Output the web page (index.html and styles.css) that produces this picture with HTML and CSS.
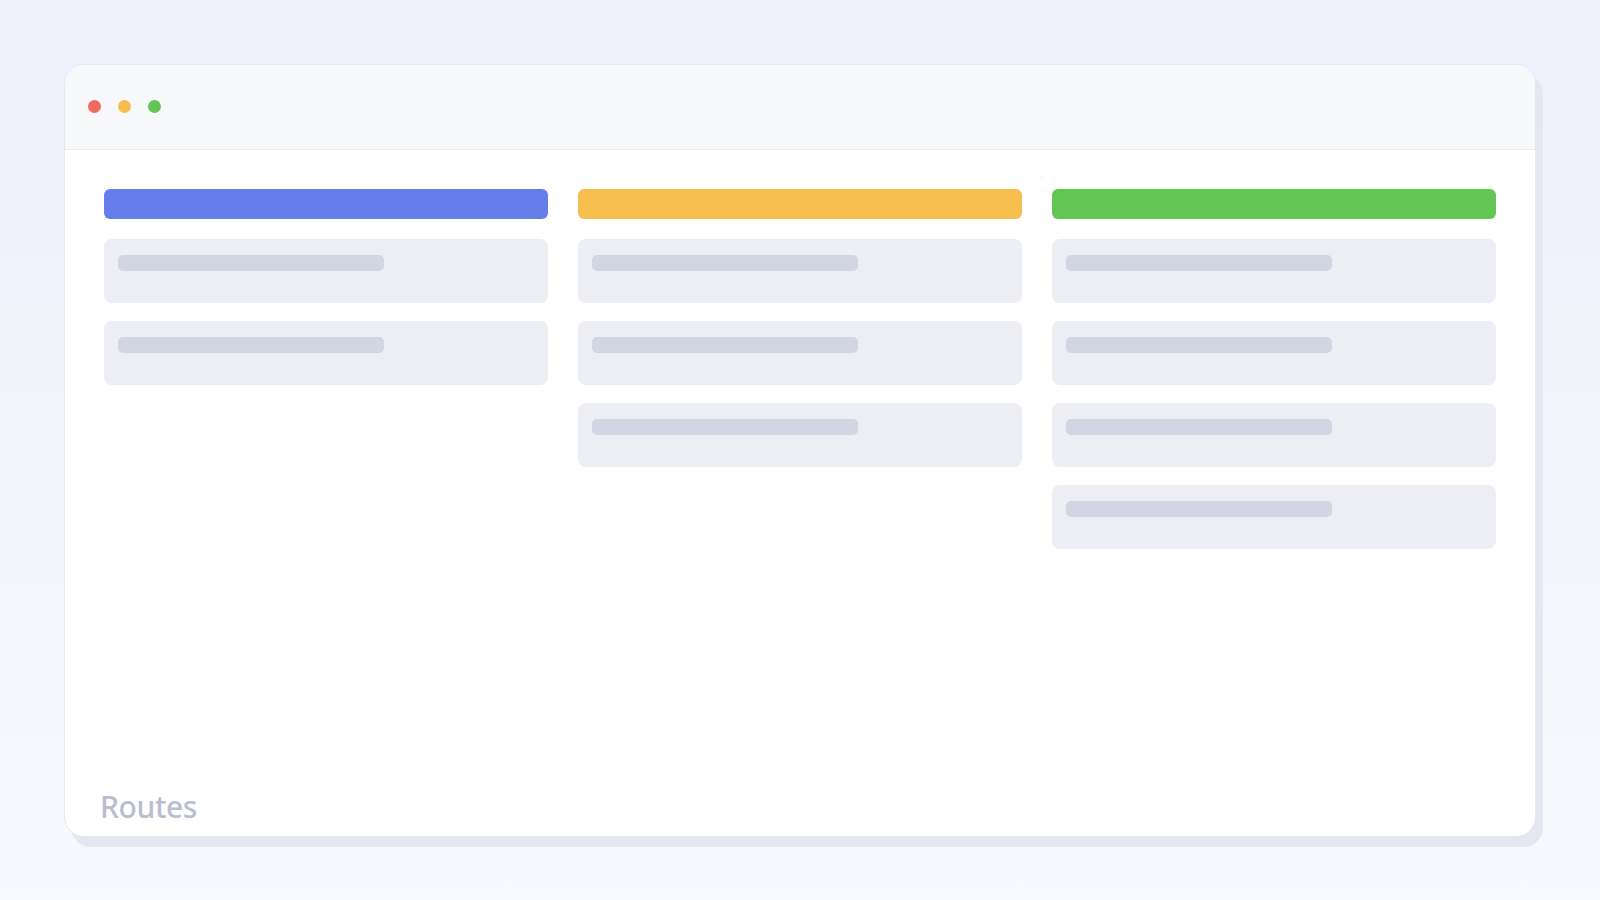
FILE: index.html
```html
<!DOCTYPE html>
<html lang="en">
<head>
<meta charset="utf-8">
<title>Routes</title>
<link rel="stylesheet" href="styles.css">
</head>
<body>
  <div class="page">
    <div class="window">
      <div class="titlebar">
        <span class="dot dot-red"></span>
        <span class="dot dot-yellow"></span>
        <span class="dot dot-green"></span>
      </div>
      <div class="board">
        <div class="column">
          <div class="col-head head-blue"></div>
          <div class="card"><div class="line"></div></div>
          <div class="card"><div class="line"></div></div>
        </div>
        <div class="column">
          <div class="col-head head-yellow"></div>
          <div class="card"><div class="line"></div></div>
          <div class="card"><div class="line"></div></div>
          <div class="card"><div class="line"></div></div>
        </div>
        <div class="column">
          <div class="col-head head-green"></div>
          <div class="card"><div class="line"></div></div>
          <div class="card"><div class="line"></div></div>
          <div class="card"><div class="line"></div></div>
          <div class="card"><div class="line"></div></div>
        </div>
      </div>
      <div class="footer">Routes</div>
    </div>
  </div>
</body>
</html>
```
FILE: styles.css
```css
* { box-sizing: border-box; }
html, body { margin: 0; padding: 0; }
body {
  width: 1600px;
  height: 900px;
  background: linear-gradient(180deg, #eef0fa 0%, #f8f9fe 100%);
  font-family: "Noto Sans", "Open Sans", sans-serif;
  overflow: hidden;
}
.page {
  padding: 64px 64px 0 64px;
}
.window {
  height: 773px;
  background: #ffffff;
  border: 1px solid #e6e8ef;
  border-radius: 20px;
  box-shadow: 7px 10px 0 #e4e6f0;
  display: flex;
  flex-direction: column;
  overflow: hidden;
}
.titlebar {
  height: 85px;
  flex: none;
  background: #f7f8fa;
  border-bottom: 1px solid #e8e9ef;
  display: flex;
  align-items: center;
  gap: 17px;
  padding-left: 23px;
  padding-bottom: 1px;
}
.dot {
  width: 13px;
  height: 13px;
  border-radius: 50%;
}
.dot-red { background: #ef6a5f; }
.dot-yellow { background: #f5be4f; }
.dot-green { background: #62c554; }
.board {
  flex: 1;
  display: grid;
  grid-template-columns: repeat(3, 1fr);
  column-gap: 30px;
  align-items: start;
  padding: 39px 39px 0 39px;
}
.column {
  display: flex;
  flex-direction: column;
  gap: 18px;
}
.col-head {
  height: 30px;
  border-radius: 6px;
  margin-bottom: 2px;
}
.head-blue { background: #667eea; }
.head-yellow { background: #f5be4f; }
.head-green { background: #62c554; }
.card {
  height: 64px;
  border-radius: 8px;
  background: #edeef4;
  padding: 16px 14px;
}
.line {
  width: 64%;
  height: 16px;
  border-radius: 5px;
  background: #d2d6e2;
}
.footer {
  flex: none;
  padding: 0 0 13px 35px;
  font-size: 30px;
  line-height: 32px;
  font-weight: 500;
  letter-spacing: -0.4px;
  color: #b9bdd0;
}
```
